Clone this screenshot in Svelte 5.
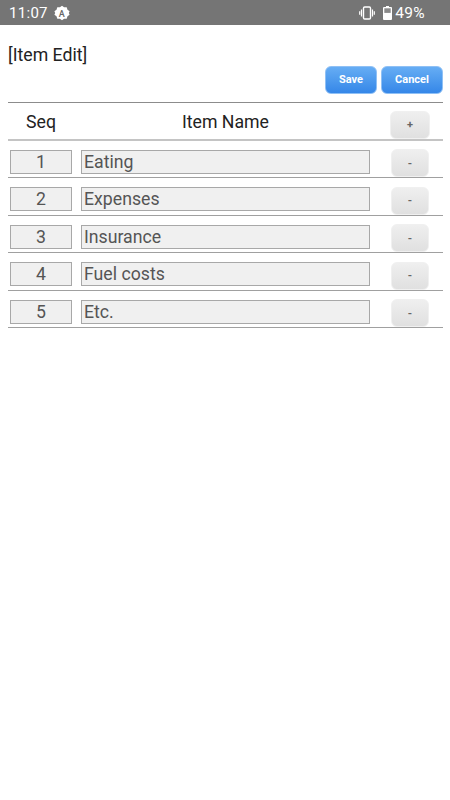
<script>
    const items = [
        { seq: 1, name: "Eating" },
        { seq: 2, name: "Expenses" },
        { seq: 3, name: "Insurance" },
        { seq: 4, name: "Fuel costs" },
        { seq: 5, name: "Etc." }
    ];
</script>

<div class="statusbar">
    <span class="time">11:07</span>
    <svg class="auto" width="16" height="16" viewBox="0 0 16 16">
        <path fill="#fff" d="M8 .8l2.100 1.500 2.600-.1.800 2.500 2.100 1.500-.8 1.800.8 1.800-2.100 1.500-.8 2.500-2.600-.1L8 15.200l-2.100-1.500-2.600.1-.8-2.500L.4 9.800 1.200 8 .4 6.200l2.100-1.500.8-2.500 2.600.1z"/>
        <text x="8" y="11.500" text-anchor="middle" class="auto-a">A</text>
    </svg>
    <span class="spacer"></span>
    <svg class="vibrate" width="16" height="14" viewBox="0 0 16 14">
        <rect x="4.500" y="1" width="7" height="12" rx="1.200" fill="none" stroke="#fff" stroke-width="1.400"/>
        <path d="M2.500 3.500v7M13.500 3.500v7M.7 5.300v3.400M15.300 5.300v3.400" stroke="#fff" stroke-width="1.200" fill="none"/>
    </svg>
    <svg class="battery" width="9" height="14" viewBox="0 0 9 14">
        <path fill="#fff" d="M3 0h3v1h2a1 1 0 0 1 1 1v11a1 1 0 0 1-1 1H1a1 1 0 0 1-1-1V2a1 1 0 0 1 1-1h2z"/>
        <rect x="1.300" y="2.300" width="6.400" height="4.600" fill="#8a8a8a"/>
    </svg>
    <span class="percent">49%</span>
</div>

<main>
    <div class="title">[Item Edit]</div>
    <div class="actions">
        <button class="blue save">Save</button>
        <button class="blue cancel">Cancel</button>
    </div>

    <div class="row head">
        <div class="seq-col label">Seq</div>
        <div class="name-col label">Item Name</div>
        <div class="btn-col"><button class="gray plus">+</button></div>
    </div>
    {#each items as item}
        <div class="row">
            <div class="seq-col"><div class="field center">{item.seq}</div></div>
            <div class="name-col"><div class="field">{item.name}</div></div>
            <div class="btn-col"><button class="gray">-</button></div>
        </div>
    {/each}
</main>

<style>
    :global(body) {
        margin: 0;
        background: #fff;
        font-family: Roboto, "Liberation Sans", sans-serif;
    }
    .statusbar {
        height: 25px;
        background: #757575;
        color: #fff;
        display: flex;
        align-items: center;
        padding: 0 25px 0 9px;
        font-size: 15px;
        letter-spacing: 0.3px;
    }
    .auto {
        margin-left: 6px;
    }
    .auto-a {
        font-size: 9px;
        font-weight: 500;
        fill: #666;
    }
    .spacer {
        flex: 1;
    }
    .vibrate {
        margin-right: -1px;
    }
    .battery {
        margin-left: 9px;
    }
    .percent {
        margin-left: 3px;
        font-size: 15.500px;
    }
    main {
        padding: 0 7px 0 8px;
    }
    .title {
        padding-top: 20px;
        font-size: 17.700px;
        line-height: 20px;
        color: #222;
    }
    .actions {
        display: flex;
        justify-content: flex-end;
        gap: 4px;
        height: 36px;
        margin-top: 1px;
    }
    .blue {
        height: 28px;
        border: 1px solid #8fc0f5;
        border-radius: 6px;
        background: linear-gradient(#66adf4, #3587e8);
        color: #fff;
        font: 700 11px Roboto, sans-serif;
        padding: 0 0 2px;
    }
    .save {
        width: 52px;
    }
    .cancel {
        width: 62px;
    }
    .row {
        box-sizing: border-box;
        display: flex;
        align-items: flex-end;
        height: 37.500px;
        border-bottom: 1px solid #a0a0a0;
    }
    .head {
        height: 38.500px;
        border-top: 1px solid #8c8c8c;
        border-bottom: 2px solid #c4c4c4;
        font-size: 17.700px;
        color: #222;
        text-align: center;
    }
    .label {
        align-self: center;
        margin-top: 2px;
    }
    .seq-col {
        width: 62px;
        margin-left: 2px;
    }
    .name-col {
        width: 289px;
        margin-left: 9px;
    }
    .btn-col {
        margin-left: 21px;
    }
    .field {
        box-sizing: border-box;
        height: 24px;
        margin-bottom: 3.500px;
        border: 1px solid #a8a8a8;
        background: #f0f0f0;
        color: #555;
        font-size: 17.700px;
        line-height: 22px;
        padding-left: 2px;
    }
    .center {
        text-align: center;
        padding: 0;
    }
    .gray {
        display: block;
        width: 38px;
        height: 28px;
        padding: 0;
        border: 1px solid #f0f0f0;
        border-radius: 6px;
        background: linear-gradient(#efefef, #e0e0e0);
        color: #666;
        font: 700 11px Roboto, sans-serif;
    }
    .plus {
        width: 40px;
        margin-left: -1px;
    }
</style>
